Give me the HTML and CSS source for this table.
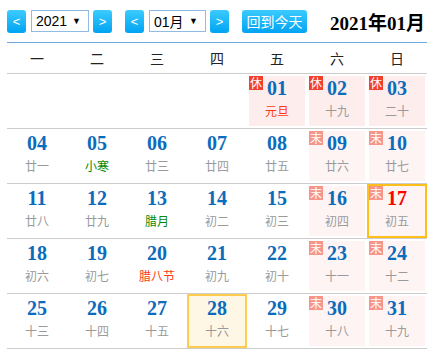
FILE: index.html
```html
<!DOCTYPE html>
<html>
<head>
<meta charset="utf-8">
<link rel="stylesheet" href="styles.css">
</head>
<body>
<div class="cal">
  <div class="toolbar">
    <button class="nav">&lt;</button>
    <div class="select year"><span>2021</span><span class="arr">▼</span></div>
    <button class="nav">&gt;</button>
    <button class="nav group">&lt;</button>
    <div class="select month"><span>01月</span><span class="arr">▼</span></div>
    <button class="nav">&gt;</button>
    <button class="today-btn">回到今天</button>
    <div class="title">2021年01月</div>
  </div>
  <div class="weekdays">
    <div>一</div><div>二</div><div>三</div><div>四</div><div>五</div><div>六</div><div>日</div>
  </div>
  <div class="row">
    <div class="cell empty"></div>
    <div class="cell empty"></div>
    <div class="cell empty"></div>
    <div class="cell empty"></div>
    <div class="cell rest"><span class="badge">休</span><div class="num">01</div><div class="lunar fest">元旦</div></div>
    <div class="cell rest"><span class="badge">休</span><div class="num">02</div><div class="lunar">十九</div></div>
    <div class="cell rest"><span class="badge">休</span><div class="num">03</div><div class="lunar">二十</div></div>
  </div>
  <div class="row">
    <div class="cell"><div class="num">04</div><div class="lunar">廿一</div></div>
    <div class="cell"><div class="num">05</div><div class="lunar term">小寒</div></div>
    <div class="cell"><div class="num">06</div><div class="lunar">廿三</div></div>
    <div class="cell"><div class="num">07</div><div class="lunar">廿四</div></div>
    <div class="cell"><div class="num">08</div><div class="lunar">廿五</div></div>
    <div class="cell wkend"><span class="badge">末</span><div class="num">09</div><div class="lunar">廿六</div></div>
    <div class="cell wkend"><span class="badge">末</span><div class="num">10</div><div class="lunar">廿七</div></div>
  </div>
  <div class="row">
    <div class="cell"><div class="num">11</div><div class="lunar">廿八</div></div>
    <div class="cell"><div class="num">12</div><div class="lunar">廿九</div></div>
    <div class="cell"><div class="num">13</div><div class="lunar term">腊月</div></div>
    <div class="cell"><div class="num">14</div><div class="lunar">初二</div></div>
    <div class="cell"><div class="num">15</div><div class="lunar">初三</div></div>
    <div class="cell wkend"><span class="badge">末</span><div class="num">16</div><div class="lunar">初四</div></div>
    <div class="cell wkend selected"><span class="badge">末</span><div class="num">17</div><div class="lunar">初五</div></div>
  </div>
  <div class="row">
    <div class="cell"><div class="num">18</div><div class="lunar">初六</div></div>
    <div class="cell"><div class="num">19</div><div class="lunar">初七</div></div>
    <div class="cell"><div class="num">20</div><div class="lunar fest">腊八节</div></div>
    <div class="cell"><div class="num">21</div><div class="lunar">初九</div></div>
    <div class="cell"><div class="num">22</div><div class="lunar">初十</div></div>
    <div class="cell wkend"><span class="badge">末</span><div class="num">23</div><div class="lunar">十一</div></div>
    <div class="cell wkend"><span class="badge">末</span><div class="num">24</div><div class="lunar">十二</div></div>
  </div>
  <div class="row">
    <div class="cell"><div class="num">25</div><div class="lunar">十三</div></div>
    <div class="cell"><div class="num">26</div><div class="lunar">十四</div></div>
    <div class="cell"><div class="num">27</div><div class="lunar">十五</div></div>
    <div class="cell today"><div class="num">28</div><div class="lunar">十六</div></div>
    <div class="cell"><div class="num">29</div><div class="lunar">十七</div></div>
    <div class="cell wkend"><span class="badge">末</span><div class="num">30</div><div class="lunar">十八</div></div>
    <div class="cell wkend"><span class="badge">末</span><div class="num">31</div><div class="lunar">十九</div></div>
  </div>
</div>
</body>
</html>
```

FILE: styles.css
```css
html, body {
  margin: 0;
  padding: 0;
  background: #fff;
}
body {
  font-family: "Liberation Sans", "Noto Sans CJK SC", sans-serif;
}
.cal {
  width: 420px;
  margin-left: 7px;
}
.toolbar {
  display: flex;
  align-items: center;
  height: 43px;
  box-sizing: border-box;
  padding-top: 10px;
  padding-bottom: 10px;
  border-bottom: 1px solid #6fa9de;
}
.nav {
  width: 19px;
  height: 23px;
  padding: 0;
  border: none;
  border-radius: 3px;
  background: linear-gradient(#3ccbff, #00a3f2);
  color: #fff;
  font-family: "Liberation Sans", sans-serif;
  font-size: 13px;
  line-height: 23px;
}
.nav.group {
  margin-left: 13px;
}
.select {
  box-sizing: border-box;
  height: 22px;
  margin: 0 4px 0 5px;
  border: 1px solid #8fbbe4;
  background: #fff;
  display: flex;
  align-items: center;
  padding-left: 4px;
  font-size: 14px;
  color: #000;
}
.select.year { width: 58px; }
.select.month { width: 57px; }
.select .arr {
  margin-left: auto;
  margin-right: 7px;
  font-size: 9px;
}
.today-btn {
  margin-left: 13px;
  width: 65px;
  height: 23px;
  padding: 0;
  border: none;
  border-radius: 3px;
  background: linear-gradient(#3ccbff, #00a3f2);
  color: #fff;
  font-family: "Noto Sans CJK SC", sans-serif;
  font-size: 14px;
  line-height: 23px;
}
.title {
  margin-left: auto;
  margin-right: 2px;
  font-family: "Liberation Serif", "Noto Sans CJK SC", serif;
  font-weight: bold;
  font-size: 19px;
  color: #000;
}
.weekdays {
  display: grid;
  grid-template-columns: repeat(7, 60px);
  height: 30px;
  border-bottom: 1px solid #cccccc;
}
.weekdays div {
  text-align: center;
  line-height: 30px;
  font-family: "Noto Sans CJK SC", sans-serif;
  font-size: 14px;
  color: #222;
}
.row {
  display: grid;
  grid-template-columns: repeat(7, 60px);
  height: 55px;
  box-sizing: border-box;
  border-bottom: 1px solid #cccccc;
}
.cell {
  position: relative;
  box-sizing: border-box;
  height: 54px;
  border: 2px solid transparent;
  background-clip: padding-box;
  padding-top: 2px;
  text-align: center;
}
.cell.rest { background-color: #fdeded; }
.cell.wkend { background-color: #fff4f4; }
.cell.selected { border-color: #ffbf1a; }
.cell.today {
  border-color: #ffcc4d;
  background-color: #fff7e6;
}
.badge {
  position: absolute;
  left: 0;
  top: 0;
  width: 14px;
  height: 14px;
  line-height: 14px;
  font-family: "Noto Sans CJK SC", sans-serif;
  font-size: 12px;
  color: #fff;
  text-align: center;
}
.rest .badge { background: #f0412b; }
.wkend .badge { background: #f6958b; }
.num {
  font-family: "Liberation Serif", serif;
  font-weight: bold;
  font-size: 20px;
  line-height: 20px;
  color: #0a6cbc;
}
.selected .num { color: #ff0000; }
.lunar {
  margin-top: 5px;
  font-family: "Noto Sans CJK SC", sans-serif;
  font-size: 12px;
  line-height: 16px;
  color: #9a9a9a;
}
.lunar.term { color: #0a8a0a; }
.lunar.fest { color: #ff3a10; }
```
